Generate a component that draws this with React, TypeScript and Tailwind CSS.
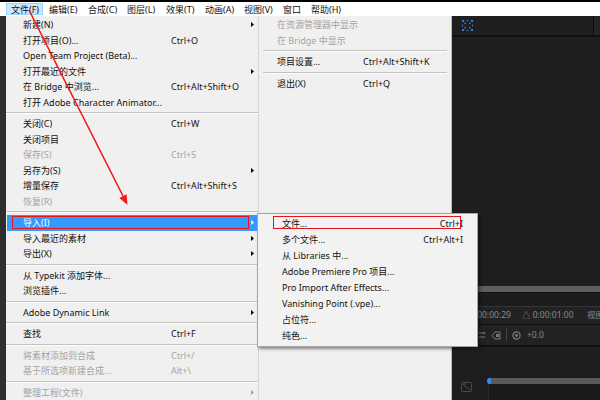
import React from 'react';

type Item = { label: string; sc?: string; arrow?: boolean; disabled?: boolean; highlight?: boolean };
type Row = Item | 'sep';

const col1: Row[] = [
  { label: '新建(N)', arrow: true },
  { label: '打开项目(O)...', sc: 'Ctrl+O' },
  { label: 'Open Team Project (Beta)...' },
  { label: '打开最近的文件', arrow: true },
  { label: '在 Bridge 中浏览...', sc: 'Ctrl+Alt+Shift+O' },
  { label: '打开 Adobe Character Animator...' },
  'sep',
  { label: '关闭(C)', sc: 'Ctrl+W' },
  { label: '关闭项目' },
  { label: '保存(S)', sc: 'Ctrl+S', disabled: true },
  { label: '另存为(S)', arrow: true },
  { label: '增量保存', sc: 'Ctrl+Alt+Shift+S' },
  { label: '恢复(R)', disabled: true },
  'sep',
  { label: '导入(I)', arrow: true, highlight: true },
  { label: '导入最近的素材', arrow: true },
  { label: '导出(X)', arrow: true },
  'sep',
  { label: '从 Typekit 添加字体...' },
  { label: '浏览插件...' },
  'sep',
  { label: 'Adobe Dynamic Link', arrow: true },
  'sep',
  { label: '查找', sc: 'Ctrl+F' },
  'sep',
  { label: '将素材添加到合成', sc: 'Ctrl+/', disabled: true },
  { label: '基于所选项新建合成...', sc: 'Alt+\\', disabled: true },
  'sep',
  { label: '整理工程(文件)', arrow: true, disabled: true },
];

const col2: Row[] = [
  { label: '在资源管理器中显示', disabled: true },
  { label: '在 Bridge 中显示', disabled: true },
  'sep',
  { label: '项目设置...', sc: 'Ctrl+Alt+Shift+K' },
  'sep',
  { label: '退出(X)', sc: 'Ctrl+Q' },
];

const sub: { label: string; sc?: string }[] = [
  { label: '文件...', sc: 'Ctrl+I' },
  { label: '多个文件...', sc: 'Ctrl+Alt+I' },
  { label: '从 Libraries 中...' },
  { label: 'Adobe Premiere Pro 项目...' },
  { label: 'Pro Import After Effects...' },
  { label: 'Vanishing Point (.vpe)...' },
  { label: '占位符...' },
  { label: '纯色...' },
];

const menuBar = ['文件(F)', '编辑(E)', '合成(C)', '图层(L)', '效果(T)', '动画(A)', '视图(V)', '窗口', '帮助(H)'];

function Tri({ color }: { color: string }) {
  return (
    <svg width="3" height="5" viewBox="0 0 3 5" className="shrink-0">
      <polygon points="0,0 3,2.5 0,5" fill={color} />
    </svg>
  );
}

function Sep({ className }: { className: string }) {
  return (
    <div className={`h-[6px] flex flex-col justify-center ${className}`}>
      <div className="h-px bg-[#c2c2c2]" />
      <div className="h-px bg-white" />
    </div>
  );
}

function Col1Row({ r }: { r: Row }) {
  if (r === 'sep') return <Sep className="" />;
  const color = r.highlight ? 'text-white' : r.disabled ? 'text-[#a3a3a3]' : 'text-[#111111]';
  const triColor = r.highlight ? '#ffffff' : r.disabled ? '#a3a3a3' : '#000000';
  return (
    <div
      className={`relative h-[15.5px] mx-[1px] flex items-center pl-[16px] pr-[3px] whitespace-nowrap ${color} ${
        r.highlight ? 'bg-[#3399ff]' : ''
      }`}
    >
      <span className="w-[148px] shrink-0">{r.label}</span>
      <span className="flex-1">{r.sc ?? ''}</span>
      {r.arrow && <Tri color={triColor} />}
      {r.highlight && (
        <div className="absolute left-[5px] right-[8px] top-[1px] bottom-[1.5px] border-[1.5px] border-[#e8141c]" />
      )}
    </div>
  );
}

function Col2Row({ r }: { r: Row }) {
  if (r === 'sep') return <Sep className="mx-[4px]" />;
  const color = r.disabled ? 'text-[#a3a3a3]' : 'text-[#111111]';
  return (
    <div className={`h-[15.5px] flex items-center pl-[18px] whitespace-nowrap ${color}`}>
      <span className="w-[86px] shrink-0">{r.label}</span>
      <span>{r.sc ?? ''}</span>
    </div>
  );
}

function FitIcon() {
  return (
    <svg width="11" height="11" viewBox="0 0 11 11">
      <g fill="#2f7fd8">
        <rect x="0" y="0" width="2" height="2" />
        <rect x="2.5" y="2.5" width="1.5" height="1.5" />
        <rect x="9" y="0" width="2" height="2" />
        <rect x="7" y="2.5" width="1.5" height="1.5" />
        <rect x="0" y="9" width="2" height="2" />
        <rect x="2.5" y="7" width="1.5" height="1.5" />
        <rect x="9" y="9" width="2" height="2" />
        <rect x="7" y="7" width="1.5" height="1.5" />
        <rect x="4.5" y="0" width="2" height="1" />
        <rect x="4.5" y="10" width="2" height="1" />
        <rect x="0" y="4.5" width="1" height="2" />
        <rect x="10" y="4.5" width="1" height="2" />
      </g>
    </svg>
  );
}

function DarkPanel() {
  return (
    <div className="flex-1 min-w-0 overflow-hidden flex flex-col bg-[#1e1e1e] text-[#8a8a8a] text-[8.5px]">
      <div className="h-[19px] flex bg-[#1f1f1f]">
        <div className="flex-1 flex items-center pl-[10px]">
          <FitIcon />
        </div>
        <div className="w-[7px] border-l border-[#0e0e0e] bg-[#242424]" />
      </div>
      <div className="h-[2px] bg-[#111111]" />
      <div className="h-[249px] bg-[#1e1e1e]" />
      <div className="h-[6px] bg-[#5e5e5e]" />
      <div className="h-px bg-[#111111]" />
      <div className="h-[13px] bg-[#1c1c1c]" />
      <div className="h-px bg-[#353535]" />
      <div className="h-[17px] bg-[#222222] flex items-center pl-[18px] whitespace-nowrap">
        <span className="w-[52px] shrink-0">0:00:00:29</span>
        <span className="w-[65px] shrink-0">△ 0:00:01:00</span>
        <span>视图</span>
      </div>
      <div className="h-px bg-[#111111]" />
      <div className="h-[20px] bg-[#222222] flex items-center pl-[26px] gap-[5px] whitespace-nowrap">
        <svg width="8" height="8" viewBox="0 0 8 8">
          <path d="M1 2 H6 M1 6 H7 M6 1 L7 2 L6 3" stroke="#7a7a7a" strokeWidth="1" fill="none" />
        </svg>
        <svg width="10" height="9" viewBox="0 0 10 9">
          <path d="M1 4.5 L4 1 H9 V8 H4 Z" stroke="#7a7a7a" strokeWidth="1" fill="none" />
          <rect x="5" y="3" width="3" height="3" fill="#7a7a7a" />
        </svg>
        <div className="w-px h-[12px] bg-[#444444]" />
        <svg width="9" height="9" viewBox="0 0 9 9">
          <circle cx="4.5" cy="4.5" r="3.6" stroke="#7a7a7a" strokeWidth="1.2" fill="none" />
          <circle cx="4.5" cy="4.5" r="1.4" fill="#7a7a7a" />
        </svg>
        <span className="ml-[1px]">+0.0</span>
      </div>
      <div className="h-[2px] bg-[#121212]" />
      <div className="flex-1 flex bg-[#1e1e1e]">
        <div className="w-[36px] shrink-0 pt-[35px] pl-[9px]">
          <svg width="11" height="10" viewBox="0 0 11 10">
            <rect x="0.5" y="0.5" width="10" height="9" rx="1" stroke="#4a4a4a" fill="none" />
            <path d="M2 2.5 L9 8" stroke="#4a4a4a" strokeWidth="1" />
            <path d="M2 2 H5" stroke="#4a4a4a" strokeWidth="1" />
          </svg>
        </div>
        <div className="flex-1 flex flex-col pt-[31px]">
          <div className="relative h-[6px] bg-[#5a5a5a]">
            <div className="absolute left-[-1px] top-0 w-[4px] h-[6px] rounded-l-full bg-[#2d8ceb]" />
          </div>
          <div className="flex-1 border-l border-[#2c2c2c] bg-[#1a1a1a]" />
        </div>
      </div>
    </div>
  );
}

export default function App() {
  return (
    <div className="relative w-[600px] h-[400px] overflow-hidden bg-[#1e1e1e] font-[family-name:'Noto_Sans','Noto_Sans_CJK_SC',sans-serif] text-[9px] leading-none">
      <div className="h-[2px] bg-black" />
      <div className="h-[14px] bg-white flex items-center pl-[6px] text-[#111111] whitespace-nowrap">
        {menuBar.map((m, i) => (
          <div
            key={m}
            className={`h-[12px] flex items-center pl-[4px] shrink-0 ${
              i === 0
                ? 'w-[37px] mr-[2px] bg-[#cce8ff] border border-[#99d1ff] pl-[3px]'
                : i === 7
                ? 'w-[28px]'
                : 'w-[39px]'
            }`}
          >
            {m}
          </div>
        ))}
      </div>
      <div className="flex h-[384px]">
        <div className="w-[6px] shrink-0 bg-[#2e2e2e]" />
        <div className="w-[446px] shrink-0 flex bg-[#f0f0f0] border-r border-[#b8b8b8]">
          <div className="w-[252px] shrink-0 pt-[1px]">
            {col1.map((r, i) => (
              <Col1Row key={i} r={r} />
            ))}
          </div>
          <div className="w-[193px] shrink-0 border-l border-[#d6d6d6] pt-[1px]">
            {col2.map((r, i) => (
              <Col2Row key={i} r={r} />
            ))}
          </div>
        </div>
        <DarkPanel />
      </div>

      <div className="absolute left-[257px] top-[213px] w-[221px] h-[134px] bg-[#f2f2f2] border border-[#a6a6a6] shadow-[2px_2px_3px_rgba(0,0,0,0.45)] pt-[1px] text-[#111111]">
        {sub.map((s, i) => (
          <div key={s.label} className="relative h-[16px] flex items-center justify-between pl-[24px] pr-[14px] whitespace-nowrap">
            <span>{s.label}</span>
            <span>{s.sc ?? ''}</span>
            {i === 0 && (
              <div className="absolute left-[15px] w-[188px] top-[1px] h-[13px] border-[1.5px] border-[#e8141c]" />
            )}
          </div>
        ))}
      </div>

      <svg className="absolute left-0 top-0 pointer-events-none" width="600" height="400" viewBox="0 0 600 400">
        <line x1="29" y1="10" x2="123" y2="196" stroke="#f01818" strokeWidth="1.6" />
        <polygon points="127.5,205 119.4,197.9 126.6,194.3" fill="#f01818" />
      </svg>
    </div>
  );
}
